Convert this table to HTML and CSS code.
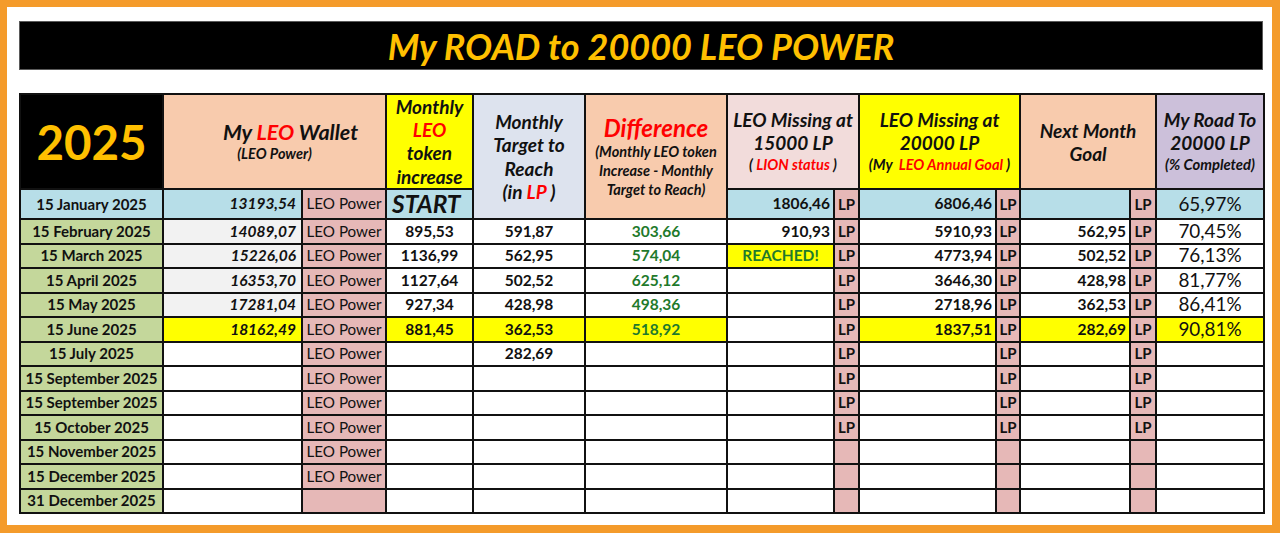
FILE: index.html
```html
<!DOCTYPE html>
<html lang="en">
<head>
<meta charset="utf-8">
<title>My ROAD to 20000 LEO POWER</title>
<link rel="stylesheet" href="styles.css">
</head>
<body>
<div class="frame">
  <div class="title-bar"><h1 class="title">My ROAD to 20000 LEO POWER</h1></div>
  <table class="sheet">
    <colgroup>
      <col class="c-date"><col class="c-wallet"><col class="c-unit"><col class="c-inc"><col class="c-target"><col class="c-diff">
      <col class="c-m15"><col class="c-lp"><col class="c-m20"><col class="c-lp2"><col class="c-next"><col class="c-lp3"><col class="c-road">
    </colgroup>
    <thead>
      <tr class="head">
        <th class="h-year">2025</th>
        <th class="h-wallet" colspan="2"><span class="big">My <span class="red">LEO</span> Wallet</span><span class="small">(LEO Power)</span></th>
        <th class="h-inc"><div class="inc-box">Monthly<br><span class="red">LEO</span><br>token<br>increase</div></th>
        <th class="h-target" rowspan="2">Monthly<br>Target to<br>Reach<br>(in <span class="red">LP</span> )</th>
        <th class="h-diff" rowspan="2"><span class="diff-title">Difference</span><span class="small">(Monthly LEO token<br>Increase - Monthly<br>Target to Reach)</span></th>
        <th class="h-m15" colspan="2">LEO Missing at<br>15000 LP<span class="small">( <span class="red">LION status</span> )</span></th>
        <th class="h-m20" colspan="2">LEO Missing at<br>20000 LP<span class="small">(My &nbsp;<span class="red">LEO Annual Goal</span> )</span></th>
        <th class="h-next" colspan="2">Next Month<br>Goal</th>
        <th class="h-road">My Road To<br>20000 LP<span class="small">(% Completed)</span></th>
      </tr>
      <tr class="jan">
        <td class="date aqua">15 January 2025</td>
        <td class="wallet aqua">13193,54</td>
        <td class="unit">LEO Power</td>
        <td class="start aqua">START</td>
        <td class="num-r aqua">1806,46</td>
        <td class="lp">LP</td>
        <td class="num-r aqua">6806,46</td>
        <td class="lp">LP</td>
        <td class="num-r aqua"></td>
        <td class="lp">LP</td>
        <td class="pct aqua">65,97%</td>
      </tr>
    </thead>
    <tbody>
      <tr>
        <td class="date">15 February 2025</td>
        <td class="wallet gray">14089,07</td>
        <td class="unit">LEO Power</td>
        <td class="num-c">895,53</td>
        <td class="num-c">591,87</td>
        <td class="num-c diffv">303,66</td>
        <td class="num-r">910,93</td>
        <td class="lp">LP</td>
        <td class="num-r">5910,93</td>
        <td class="lp">LP</td>
        <td class="num-r">562,95</td>
        <td class="lp">LP</td>
        <td class="pct">70,45%</td>
      </tr>
      <tr>
        <td class="date">15 March 2025</td>
        <td class="wallet gray">15226,06</td>
        <td class="unit">LEO Power</td>
        <td class="num-c">1136,99</td>
        <td class="num-c">562,95</td>
        <td class="num-c diffv">574,04</td>
        <td class="reached">REACHED!</td>
        <td class="lp">LP</td>
        <td class="num-r">4773,94</td>
        <td class="lp">LP</td>
        <td class="num-r">502,52</td>
        <td class="lp">LP</td>
        <td class="pct">76,13%</td>
      </tr>
      <tr>
        <td class="date">15 April 2025</td>
        <td class="wallet gray">16353,70</td>
        <td class="unit">LEO Power</td>
        <td class="num-c">1127,64</td>
        <td class="num-c">502,52</td>
        <td class="num-c diffv">625,12</td>
        <td class="num-r"></td>
        <td class="lp">LP</td>
        <td class="num-r">3646,30</td>
        <td class="lp">LP</td>
        <td class="num-r">428,98</td>
        <td class="lp">LP</td>
        <td class="pct">81,77%</td>
      </tr>
      <tr>
        <td class="date">15 May 2025</td>
        <td class="wallet gray">17281,04</td>
        <td class="unit">LEO Power</td>
        <td class="num-c">927,34</td>
        <td class="num-c">428,98</td>
        <td class="num-c diffv">498,36</td>
        <td class="num-r"></td>
        <td class="lp">LP</td>
        <td class="num-r">2718,96</td>
        <td class="lp">LP</td>
        <td class="num-r">362,53</td>
        <td class="lp">LP</td>
        <td class="pct">86,41%</td>
      </tr>
      <tr>
        <td class="date">15 June 2025</td>
        <td class="wallet yellow">18162,49</td>
        <td class="unit">LEO Power</td>
        <td class="num-c yellow">881,45</td>
        <td class="num-c yellow">362,53</td>
        <td class="num-c diffv yellow">518,92</td>
        <td class="num-r"></td>
        <td class="lp">LP</td>
        <td class="num-r yellow">1837,51</td>
        <td class="lp">LP</td>
        <td class="num-r yellow">282,69</td>
        <td class="lp">LP</td>
        <td class="pct yellow">90,81%</td>
      </tr>
      <tr>
        <td class="date">15 July 2025</td>
        <td class="wallet"></td>
        <td class="unit">LEO Power</td>
        <td class="num-c"></td>
        <td class="num-c">282,69</td>
        <td class="num-c"></td>
        <td class="num-r"></td>
        <td class="lp">LP</td>
        <td class="num-r"></td>
        <td class="lp">LP</td>
        <td class="num-r"></td>
        <td class="lp">LP</td>
        <td class="pct"></td>
      </tr>
      <tr>
        <td class="date">15 September 2025</td>
        <td class="wallet"></td>
        <td class="unit">LEO Power</td>
        <td></td><td></td><td></td><td></td>
        <td class="lp">LP</td>
        <td></td>
        <td class="lp">LP</td>
        <td></td>
        <td class="lp">LP</td>
        <td></td>
      </tr>
      <tr>
        <td class="date">15 September 2025</td>
        <td class="wallet"></td>
        <td class="unit">LEO Power</td>
        <td></td><td></td><td></td><td></td>
        <td class="lp">LP</td>
        <td></td>
        <td class="lp">LP</td>
        <td></td>
        <td class="lp">LP</td>
        <td></td>
      </tr>
      <tr>
        <td class="date">15 October 2025</td>
        <td class="wallet"></td>
        <td class="unit">LEO Power</td>
        <td></td><td></td><td></td><td></td>
        <td class="lp">LP</td>
        <td></td>
        <td class="lp">LP</td>
        <td></td>
        <td class="lp">LP</td>
        <td></td>
      </tr>
      <tr>
        <td class="date">15 November 2025</td>
        <td class="wallet"></td>
        <td class="unit">LEO Power</td>
        <td></td><td></td><td></td><td></td>
        <td class="lp"></td>
        <td></td>
        <td class="lp"></td>
        <td></td>
        <td class="lp"></td>
        <td></td>
      </tr>
      <tr>
        <td class="date">15 December 2025</td>
        <td class="wallet"></td>
        <td class="unit">LEO Power</td>
        <td></td><td></td><td></td><td></td>
        <td class="lp"></td>
        <td></td>
        <td class="lp"></td>
        <td></td>
        <td class="lp"></td>
        <td></td>
      </tr>
      <tr>
        <td class="date">31 December 2025</td>
        <td class="wallet"></td>
        <td class="unit"></td>
        <td></td><td></td><td></td><td></td>
        <td class="lp"></td>
        <td></td>
        <td class="lp"></td>
        <td></td>
        <td class="lp"></td>
        <td></td>
      </tr>
    </tbody>
  </table>
</div>
</body>
</html>
```

FILE: styles.css
```css
* { box-sizing: border-box; }

html, body {
  margin: 0;
  padding: 0;
  background: #ffffff;
}

body {
  font-family: "Lato", "Liberation Sans", sans-serif;
  color: #111111;
}

.frame {
  width: 1280px;
  height: 533px;
  background: #ffffff;
  border-style: solid;
  border-color: #F49B2B;
  border-width: 7px 8px 8px 7px;
  padding: 14px 9px 0 12px;
  display: flex;
  flex-direction: column;
  gap: 23px;
  overflow: hidden;
}

.title-bar {
  flex: 0 0 49px;
  height: 49px;
  background: #000000;
  border: 1px solid #5a5a5a;
  display: flex;
  align-items: center;
  justify-content: center;
}

.title {
  margin: 0;
  font-size: 36px;
  font-weight: 700;
  font-style: italic;
  color: #FFC000;
  line-height: 1;
}

.sheet {
  flex: 0 0 auto;
  width: 1244px;
  table-layout: fixed;
  border-collapse: collapse;
  border: 2px solid #111111;
}

.c-date { width: 143px; }
.c-wallet { width: 139px; }
.c-unit { width: 84px; }
.c-inc { width: 87px; }
.c-target { width: 112px; }
.c-diff { width: 142px; }
.c-m15 { width: 107px; }
.c-lp { width: 25px; }
.c-m20 { width: 137px; }
.c-lp2 { width: 24px; }
.c-next { width: 110px; }
.c-lp3 { width: 26px; }
.c-road { width: 108px; }

.sheet th,
.sheet td {
  border: 2px solid #111111;
  padding: 0;
  overflow: hidden;
  white-space: nowrap;
}

/* header row */
.head { height: 95px; }

.head th {
  font-weight: 700;
  font-style: italic;
  font-size: 19px;
  line-height: 23px;
  text-align: center;
  vertical-align: middle;
}

.head .small {
  display: block;
  font-size: 14.6px;
  line-height: 21px;
}

.red { color: #FF0000; }

.h-year {
  background: #000000;
  color: #FFC000;
  font-style: normal !important;
  font-size: 47.5px !important;
  line-height: 1 !important;
}

.h-wallet {
  background: #F8CBAD;
}
.h-wallet .big {
  display: block;
  font-size: 21.5px;
  line-height: 24px;
  padding-left: 32px;
}
.h-wallet .small { font-size: 14.5px; line-height: 20px; }

.h-inc {
  background: #FFFF00;
  vertical-align: top !important;
}
.inc-box {
  height: 93px;
  overflow: visible;
  font-size: 19px;
  line-height: 23.2px;
}

.h-target {
  background: #DDE3EE;
  line-height: 23.5px !important;
}

.h-diff {
  background: #F8CBAD;
}
.diff-title {
  display: block;
  color: #FF0000;
  font-size: 24px;
  line-height: 28px;
}
.h-diff .small {
  font-size: 14.5px;
  line-height: 19px;
}

.h-m15 { background: #F2DCDB; }
.h-m15 .small { line-height: 22px; }
.h-m20 { background: #FFFF00; }
.h-m20 .small { line-height: 22px; }
.h-next { background: #F8CBAD; }
.h-road { background: #CCC0DA; }
.h-road .small { font-size: 14.8px; line-height: 21px; }

/* body rows */
.jan { height: 30px; }
tbody tr { height: 24.5px; }

.sheet td {
  font-size: 15.5px;
  font-weight: 700;
  background: #ffffff;
  vertical-align: middle;
  line-height: 1;
}

.date {
  background: #C4D79B !important;
  text-align: center;
  font-size: 15px !important;
}
.date.aqua { background: #B7DEE8 !important; }

.wallet {
  text-align: right;
  font-style: italic;
  font-size: 15.5px !important;
  padding-right: 5px !important;
}

.unit {
  background: #E6B8B7 !important;
  text-align: center;
  font-weight: 400 !important;
  font-size: 15.2px !important;
}

.lp {
  background: #E6B8B7 !important;
  text-align: center;
  font-size: 15px !important;
}

.start {
  font-style: italic;
  font-size: 24.5px !important;
  text-align: left;
  padding-left: 5px !important;
}

.num-c { text-align: center; }
.num-r { text-align: right; padding-right: 3px !important; }

.diffv { color: #1F7A2C; }

.reached {
  background: #FFFF00 !important;
  color: #1F7A2C;
  text-align: center;
}

.pct {
  text-align: center;
  font-weight: 400 !important;
  font-size: 18.9px !important;
}

.aqua { background: #B7DEE8 !important; }
.gray { background: #F2F2F2 !important; }
.yellow { background: #FFFF00 !important; }
```
